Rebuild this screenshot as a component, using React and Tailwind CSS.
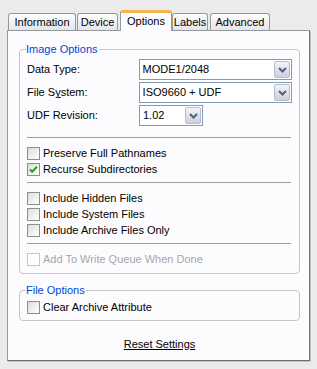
import React from 'react';

const tabs = [
  { name: 'Information', w: 'w-[68px] mr-px' },
  { name: 'Device', w: 'w-[41px] mr-[2px]' },
  { name: 'Options', w: 'w-[52px]' },
  { name: 'Labels', w: 'w-[36px] mr-[2px]' },
  { name: 'Advanced', w: 'w-[60px]' },
];

function Chevron() {
  return (
    <svg width="9" height="6" viewBox="0 0 9 6">
      <path d="M1 1l3.5 3.5L8 1" fill="none" stroke="#4d6185" strokeWidth="2" />
    </svg>
  );
}

function Dropdown({ value, width }) {
  return (
    <div className={`flex h-[21px] ${width} items-center border border-[#7f9db9] bg-white`}>
      <span className="flex-1 pl-[3px] text-black">{value}</span>
      <div className="m-px flex h-[17px] w-[16px] items-center justify-center rounded-[2px] border border-[#b7bdcf] bg-gradient-to-b from-[#f3f3f8] to-[#ccd0dc]">
        <Chevron />
      </div>
    </div>
  );
}

function Check({ label, checked, disabled }) {
  return (
    <div className={`flex h-[16px] items-center gap-[3px] ${disabled ? 'text-[#a7a6aa]' : 'text-black'}`}>
      <div
        className={`flex h-[13px] w-[13px] items-center justify-center border ${
          disabled ? 'border-[#cac8bb] bg-white' : 'border-[#8e8f8f] bg-gradient-to-br from-[#dcdcd7] to-white'
        }`}
      >
        {checked && (
          <svg width="9" height="9" viewBox="0 0 9 9">
            <path d="M1 4.5l2.2 2.2L8 1.8" fill="none" stroke="#21a121" strokeWidth="2" />
          </svg>
        )}
      </div>
      <span>{label}</span>
    </div>
  );
}

function Group({ title, children, className }) {
  return (
    <div className={`relative w-[281px] rounded-[4px] border border-[#c5c5c5] ${className}`}>
      <span className="absolute left-[6px] top-[-8px] bg-[#fcfcfe] pr-[1px] leading-[14px] text-[#0046d5]">{title}</span>
      {children}
    </div>
  );
}

export default function App() {
  return (
    <div
      className="h-[369px] w-[317px] bg-[#ebebeb] pt-[10px] text-[11px]"
      style={{ fontFamily: '"Liberation Sans", Arial, sans-serif' }}
    >
      {/* tabs */}
      <div className="flex h-[20px] items-end pl-[8px]">
        {tabs.map((t) => {
          const active = t.name === 'Options';
          return (
            <div
              key={t.name}
              className={
                active
                  ? `relative z-10 -mb-px flex h-[21px] ${t.w} justify-center rounded-t-[3px] border-x border-t-[3px] border-x-[#919b9c] border-t-[#f5b54a] bg-[#fcfcfe]`
                  : `flex h-[17px] ${t.w} items-center justify-center rounded-t-[3px] border-x border-t border-[#919b9c] bg-gradient-to-b from-white to-[#e4e4ea] pt-px`
              }
            >
              {t.name}
            </div>
          );
        })}
      </div>

      {/* panel */}
      <div className="ml-[7px] flex h-[331px] w-[303px] flex-col border border-[#919b9c] border-b-[#6d7070] border-r-[#6d7070] bg-[#fcfcfe] pl-[11px] pt-[18px] shadow-[1px_1px_0_#c4c4c4]">
        <Group title="Image Options" className="px-[7px] pt-[9px] pb-[6px]">
          <div className="flex flex-col gap-[2px]">
            <div className="flex items-center">
              <span className="w-[112px]">Data Type:</span>
              <Dropdown value="MODE1/2048" width="w-[154px]" />
            </div>
            <div className="flex items-center">
              <span className="w-[112px]">
                File S<span className="underline">y</span>stem:
              </span>
              <Dropdown value="ISO9660 + UDF" width="w-[154px]" />
            </div>
            <div className="flex items-center">
              <span className="w-[112px]">UDF Revision:</span>
              <Dropdown value="1.02" width="w-[64px]" />
            </div>
          </div>
          <div className="mt-[11px] mb-[7px] mr-[1px] border-t border-[#a0a0a0]" />
          <Check label="Preserve Full Pathnames" />
          <Check label="Recurse Subdirectories" checked />
          <div className="mt-[5px] mb-[7px] mr-[1px] border-t border-[#a0a0a0]" />
          <Check label="Include Hidden Files" />
          <Check label="Include System Files" />
          <Check label="Include Archive Files Only" />
          <div className="mt-[5px] mb-[7px] mr-[1px] border-t border-[#a0a0a0]" />
          <Check label="Add To Write Queue When Done" disabled />
        </Group>

        <Group title="File Options" className="mt-[16px] px-[7px] pt-[8px] pb-[5px]">
          <Check label="Clear Archive Attribute" />
        </Group>

        <div className="mt-[15px] w-[281px] text-center">
          <span className="underline">Reset Settings</span>
        </div>
      </div>
    </div>
  );
}
